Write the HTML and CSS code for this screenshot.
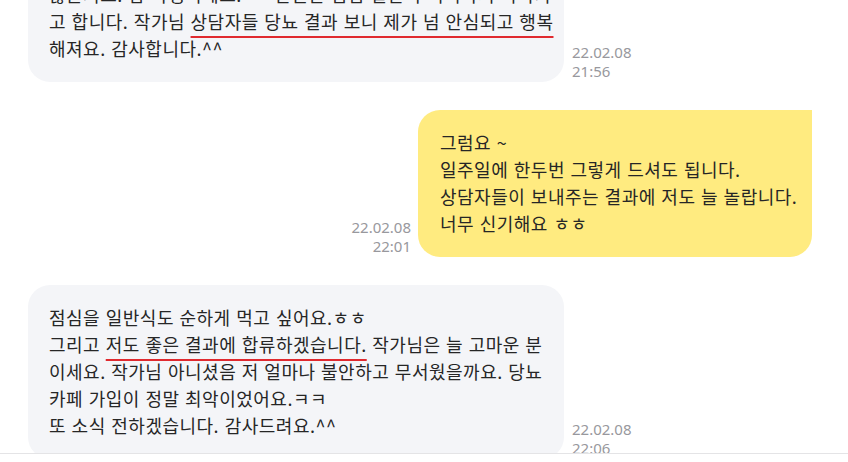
FILE: index.html
```html
<!DOCTYPE html>
<html lang="ko">

<head>
    <meta charset="UTF-8">
    <meta name="viewport" content="width=device-width, initial-scale=1.0">
    <title>상담 후기</title>
    <link rel="stylesheet" href="styles.css">
</head>

<body>
    <div class="chat">
        <div class="chat-list">
            <!-- received -->
            <div class="row">
                <div class="bubble gray">
                    않은거죠. 참 다행이에요. ^^ 언젠간 점심 일반식 먹어야지 하다가<br>
                    고 합니다. 작가님 <span class="mark">상담자들 당뇨 결과 보니 제가 넘 안심되고 행복</span><br>
                    해져요. 감사합니다.^^
                </div>
                <div class="time">22.02.08<br>21:56</div>
            </div>

            <!-- sent -->
            <div class="row mine">
                <div class="time right">22.02.08<br>22:01</div>
                <div class="bubble yellow">
                    그럼요 ~<br>
                    일주일에 한두번 그렇게 드셔도 됩니다.<br>
                    상담자들이 보내주는 결과에 저도 늘 놀랍니다.<br>
                    너무 신기해요 ㅎㅎ
                </div>
            </div>

            <!-- received -->
            <div class="row">
                <div class="bubble gray">
                    점심을 일반식도 순하게 먹고 싶어요.ㅎㅎ<br>
                    그리고 <span class="mark">저도 좋은 결과에 합류하겠습니다.</span> 작가님은 늘 고마운 분<br>
                    이세요. 작가님 아니셨음 저 얼마나 불안하고 무서웠을까요. 당뇨<br>
                    카페 가입이 정말 최악이었어요.ㅋㅋ<br>
                    또 소식 전하겠습니다. 감사드려요.^^
                </div>
                <div class="time">22.02.08<br>22:06</div>
            </div>
        </div>
    </div>
    <div class="bottom"></div>
</body>

</html>
```

FILE: styles.css
```css
/* page reset */
body {
    margin: 0;
    background-color: #fff;
    font-family: "Noto Sans CJK KR", "Noto Sans", sans-serif;
    color: #262626;
}

.chat {
    height: 453px;
    overflow: hidden;
    border-bottom: 1px solid #e4e4e6;
}

.chat-list {
    display: flex;
    flex-direction: column;
    gap: 28px;
    margin-top: -38px;
}

.row {
    display: flex;
    align-items: flex-end;
    gap: 8px;
    padding: 0 36px 0 28px;
}

.row.mine {
    justify-content: flex-end;
    gap: 7px;
}

.bubble {
    font-size: 18px;
    letter-spacing: 0.5px;
    line-height: 27px;
    padding: 19px 21px 20px 21px;
    border-radius: 22px;
    white-space: nowrap;
}

.gray {
    background-color: #f4f5f8;
    width: 494px;
}

.yellow {
    background-color: #ffeb80;
    width: 351px;
    padding-left: 22px;
    border-top-right-radius: 0;
}

.time {
    font-family: "Noto Sans", sans-serif;
    font-size: 15px;
    line-height: 19px;
    color: #98989d;
    margin-bottom: 1px;
}

.time.right {
    text-align: right;
}

.mark {
    text-decoration: underline;
    text-decoration-color: #e02a2f;
    text-decoration-thickness: 2px;
    text-underline-offset: 7px;
}

.bottom {
    height: 8px;
    background-color: #fff;
}
```
